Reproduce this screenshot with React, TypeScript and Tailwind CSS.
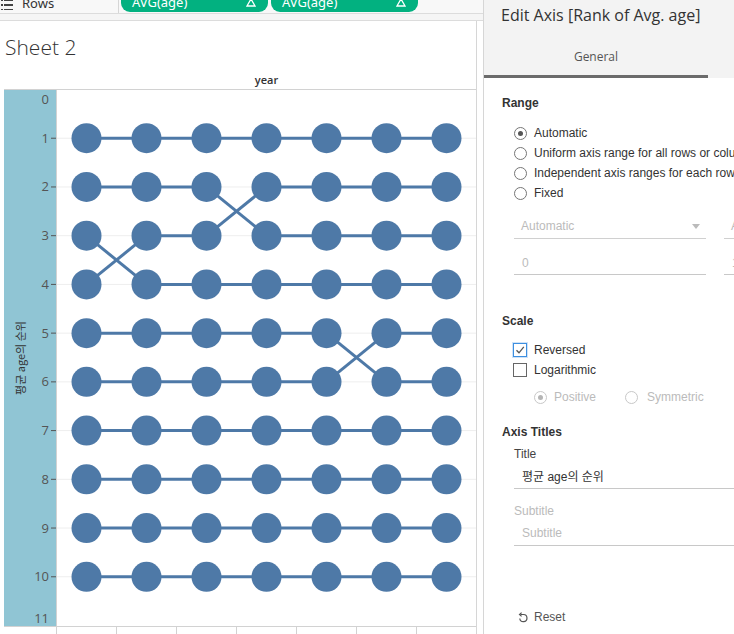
import { ReactNode } from "react";

// rank of each series per year column
const series: number[][] = [
  [1, 1, 1, 1, 1, 1, 1],
  [2, 2, 2, 3, 3, 3, 3],
  [3, 4, 4, 4, 4, 4, 4],
  [4, 3, 3, 2, 2, 2, 2],
  [5, 5, 5, 5, 5, 6, 6],
  [6, 6, 6, 6, 6, 5, 5],
  [7, 7, 7, 7, 7, 7, 7],
  [8, 8, 8, 8, 8, 8, 8],
  [9, 9, 9, 9, 9, 9, 9],
  [10, 10, 10, 10, 10, 10, 10],
];

const PLOT_H = 536;
const UNIT = PLOT_H / 11;
const yOf = (r: number) => r * UNIT - 0.5;
const xOf = (i: number) => 29.5 + i * 60;
const BLUE = "#4e79a7";

const Shelf = () => (
  <div className="flex h-[15px] border-b border-[#dcdcdc] bg-[#f8f8f8] overflow-hidden">
    <div className="w-[119px] flex items-start gap-[9px] border-r border-[#d6d6d6] -mt-[6px]">
      <svg width="12" height="14" viewBox="0 0 12 14" className="ml-[1px] mt-[2px]">
        <rect x="0" y="3" width="2" height="2" fill="#444" />
        <rect x="3" y="3" width="9" height="2" fill="#444" />
        <rect x="0" y="8" width="2" height="2" fill="#444" />
        <rect x="3" y="8" width="9" height="2" fill="#444" />
        <rect x="0" y="13" width="2" height="2" fill="#444" />
        <rect x="3" y="13" width="9" height="2" fill="#444" />
      </svg>
      <span className="text-[13px] leading-[18px] text-[#333]">Rows</span>
    </div>
    <div className="flex gap-[3px] pl-[2px]">
      {[0, 1].map((k) => (
        <div
          key={k}
          className="w-[147px] h-[20px] -mt-[8px] rounded-b-[9px] rounded-t-[9px] bg-[#02b180] flex items-center justify-between pl-[11px] pr-[12px]"
        >
          <span className="text-[13px] leading-[16px] text-white">AVG(age)</span>
          <svg width="10" height="9" viewBox="0 0 10 9">
            <path d="M5 1 L9 8 L1 8 Z" fill="none" stroke="#fff" strokeWidth="1.3" />
          </svg>
        </div>
      ))}
    </div>
  </div>
);

const AxisPane = () => (
  <svg width="52" height={PLOT_H} className="block shrink-0">
    <rect width="52" height={PLOT_H} fill="#90c5d4" />
    {Array.from({ length: 12 }, (_, r) => {
      let y = yOf(r);
      if (r === 0) y = 9;
      if (r === 11) y = 528;
      return (
        <g key={r}>
          <text x="45" y={y + 4.5} textAnchor="end" fontSize="13" fill="#555">
            {r}
          </text>
          {r > 0 && r < 11 && <line x1="47" x2="52" y1={yOf(r)} y2={yOf(r)} stroke="#555" strokeWidth="1" />}
        </g>
      );
    })}
    <text
      x="0"
      y="0"
      transform={`translate(18 ${PLOT_H / 2}) rotate(-90)`}
      textAnchor="middle"
      dominantBaseline="middle"
      fontSize="11"
      fill="#333"
      style={{ fontFamily: '"Noto Sans CJK KR", sans-serif' }}
    >
      평균 age의 순위
    </text>
  </svg>
);

const Plot = () => (
  <svg width="419" height={PLOT_H} className="block shrink-0">
    <rect width="419" height={PLOT_H} fill="#fff" />
    {Array.from({ length: 10 }, (_, i) => (
      <line key={i} x1="0" x2="419" y1={yOf(i + 1)} y2={yOf(i + 1)} stroke="#eeeeee" strokeWidth="1" />
    ))}
    {series.map((s, si) =>
      s.slice(1).map((r, i) => (
        <line
          key={`${si}-${i}`}
          x1={xOf(i)}
          y1={yOf(s[i])}
          x2={xOf(i + 1)}
          y2={yOf(r)}
          stroke={BLUE}
          strokeWidth="3"
        />
      ))
    )}
    {series.map((s, si) =>
      s.map((r, i) => <circle key={`c${si}-${i}`} cx={xOf(i)} cy={yOf(r)} r="15" fill={BLUE} />)
    )}
  </svg>
);

const Sheet = () => (
  <div className="flex-1 flex">
    <div className="w-[477px] border-r border-[#d6d6d6] flex flex-col" style={{ fontFamily: '"Open Sans", sans-serif' }}>
      <div className="mt-[12px] pl-[5px] text-[21px] leading-[28px] font-light text-[#333]">Sheet 2</div>
      <div className="mt-[11px] text-center pl-[57px] text-[11px] leading-[16px] font-semibold text-[#333]">year</div>
      <div className="ml-[4px] mt-[1px] border-t border-b border-[#d2d2d2] flex">
        <AxisPane />
        <div className="w-px bg-[#d2d2d2]" />
        <Plot />
      </div>
      <div className="ml-[56px] flex h-[7px]">
        {Array.from({ length: 7 }, (_, i) => (
          <div key={i} className="w-[60px] border-l border-[#d2d2d2]" />
        ))}
      </div>
    </div>
    <div className="flex-1" />
  </div>
);

const Radio = ({ on, disabled }: { on?: boolean; disabled?: boolean }) => (
  <span
    className={`w-[13px] h-[13px] rounded-full border bg-white flex items-center justify-center shrink-0 ${
      disabled ? "border-[#c8c8c8]" : "border-[#767676]"
    }`}
  >
    {on && <span className={`w-[5px] h-[5px] rounded-full ${disabled ? "bg-[#b5b5b5]" : "bg-[#555]"}`} />}
  </span>
);

const Row = ({ children }: { children: ReactNode }) => (
  <div className="h-[20px] flex items-center gap-[7px] text-[12px] text-[#333]">{children}</div>
);

const Check = ({ on }: { on?: boolean }) => (
  <span
    className={`w-[14px] h-[14px] border bg-white flex items-center justify-center shrink-0 ${
      on ? "border-[#3d8fe0] shadow-[0_0_0_1px_#cfe3f8]" : "border-[#666]"
    }`}
  >
    {on && (
      <svg width="10" height="10" viewBox="0 0 10 10">
        <path d="M1.5 5.2 L4 7.8 L8.8 1.8" fill="none" stroke="#555" strokeWidth="1.3" />
      </svg>
    )}
  </span>
);

const EditAxis = () => (
  <div
    className="w-[251px] shrink-0 border-l border-[#d6d6d6] overflow-hidden whitespace-nowrap"
    style={{ fontFamily: '"Liberation Sans", Arial, sans-serif' }}
  >
    <div className="h-[78px] bg-[#f3f3f3] flex flex-col" style={{ fontFamily: '"Open Sans", sans-serif' }}>
      <div className="mt-[4px] pl-[17px] text-[16px] leading-[22px] text-[#333]">Edit Axis [Rank of Avg. age]</div>
      <div className="mt-[23px] w-[224px] text-center text-[12px] leading-[16px] text-[#555] pb-[10px] border-b-[3px] border-[#6b6b6b]">
        General
      </div>
    </div>

    <div className="pl-[18px] w-[520px]">
      <div className="mt-[17px] text-[12px] leading-[16px] font-bold text-[#333]">Range</div>
      <div className="mt-[12px] pl-[12px]">
        <Row>
          <Radio on />
          Automatic
        </Row>
        <Row>
          <Radio />
          Uniform axis range for all rows or columns
        </Row>
        <Row>
          <Radio />
          Independent axis ranges for each row or column
        </Row>
        <Row>
          <Radio />
          Fixed
        </Row>
      </div>

      <div className="pl-[12px] flex gap-[18px] mt-[13px]">
        {["Automatic", "Automatic"].map((t, i) => (
          <div
            key={i}
            className="w-[192px] shrink-0 pt-[2px] pb-[4px] pl-[7px] pr-[6px] flex items-center justify-between border-b border-[#d0d0d0] text-[12px] leading-[16px] text-[#bbb]"
          >
            {t}
            <svg width="8" height="5" viewBox="0 0 8 5">
              <path d="M0 0 L8 0 L4 5 Z" fill="#bbb" />
            </svg>
          </div>
        ))}
      </div>
      <div className="pl-[12px] flex gap-[18px] mt-[16px]">
        {["0", "11"].map((t, i) => (
          <div key={i} className="w-[192px] shrink-0 pb-[3px] pl-[8px] border-b border-[#c8c8c8] text-[12px] leading-[16px] text-[#bbb]">
            {t}
          </div>
        ))}
      </div>

      <div className="mt-[38px] text-[12px] leading-[16px] font-bold text-[#333]">Scale</div>
      <div className="mt-[11px] pl-[11px]">
        <Row>
          <Check on />
          Reversed
        </Row>
        <Row>
          <Check />
          Logarithmic
        </Row>
      </div>
      <div className="mt-[7px] pl-[32px] h-[20px] flex items-center gap-[29px] text-[12px] text-[#bbb]">
        <span className="flex items-center gap-[7px]">
          <Radio on disabled />
          Positive
        </span>
        <span className="flex items-center gap-[9px]">
          <Radio disabled />
          Symmetric
        </span>
      </div>

      <div className="mt-[17px] text-[12px] leading-[16px] font-bold text-[#333]">Axis Titles</div>
      <div className="pl-[12px]">
        <div className="mt-[6px] text-[12px] leading-[16px] text-[#444]">Title</div>
        <div
          className="mt-[7px] w-[260px] pb-[3px] pl-[8px] border-b border-[#c8c8c8] text-[12px] leading-[16px] text-[#333]"
          style={{ fontFamily: '"Liberation Sans", "Noto Sans CJK KR", sans-serif' }}
        >
          평균 age의 순위
        </div>
        <div className="mt-[14px] text-[12px] leading-[16px] text-[#bbb]">Subtitle</div>
        <div className="mt-[6px] w-[260px] pb-[4px] pl-[8px] border-b border-[#c8c8c8] text-[12px] leading-[16px] text-[#bbb]">
          Subtitle
        </div>
        <div className="mt-[63px] pl-[4px] flex items-center gap-[6px] text-[12px] leading-[16px] text-[#555]">
          <svg width="10" height="11" viewBox="0 0 10 11">
            <path d="M2.5 2.5 H5.5 A3.6 3.6 0 1 1 1.8 6.5" fill="none" stroke="#555" strokeWidth="1.2" />
            <path d="M3.6 0.6 L1.5 2.5 L3.6 4.4" fill="none" stroke="#555" strokeWidth="1.2" />
          </svg>
          Reset
        </div>
      </div>
    </div>
  </div>
);

const App = () => {
  return (
    <div className="w-[734px] h-[634px] overflow-hidden bg-white flex">
      <div className="w-[483px] flex flex-col">
        <Shelf />
        <div className="h-[7px] bg-[#f5f5f5] border-b border-[#dcdcdc]" />
        <Sheet />
      </div>
      <EditAxis />
    </div>
  );
};

export default App;
